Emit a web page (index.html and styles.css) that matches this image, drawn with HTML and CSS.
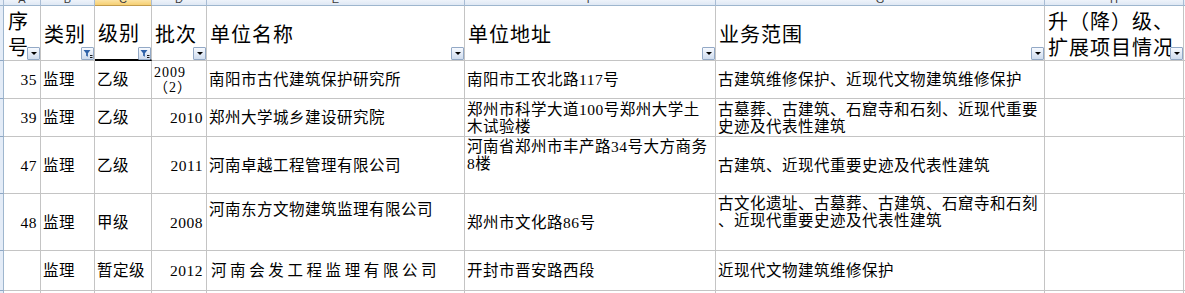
FILE: index.html
```html
<!DOCTYPE html>
<html lang="zh-CN">
<head>
<meta charset="utf-8">
<title>监理单位名单</title>
<link rel="stylesheet" href="styles.css">
</head>
<body>
<div class="sheet">
  <!-- column letter strip -->
  <div class="colhdr corner"></div>
  <div class="colhdr"><span>A</span></div>
  <div class="colhdr"><span>B</span></div>
  <div class="colhdr sel"><span>C</span></div>
  <div class="colhdr"><span>D</span></div>
  <div class="colhdr"><span>E</span></div>
  <div class="colhdr"><span>F</span></div>
  <div class="colhdr"><span>G</span></div>
  <div class="colhdr"><span>H</span></div>
  <div class="colhdr"><span>I</span></div>

  <!-- header row -->
  <div class="rowhdr"></div>
  <div class="cell head"><span class="wrap">序号</span><i class="dd"></i></div>
  <div class="cell head">类别<i class="dd flt"><svg viewBox="0 0 13 13" width="13" height="13"><path d="M2.5 3h7l-2.6 3.2v3.6l-1.8-1V6.2z" fill="#2f62a8"/><path d="M9 8.5h2.5M9 10.5h2.5" stroke="#1b1b1b" stroke-width="1"/></svg></i></div>
  <div class="cell head active">级别<i class="dd flt"><svg viewBox="0 0 13 13" width="13" height="13"><path d="M2.5 3h7l-2.6 3.2v3.6l-1.8-1V6.2z" fill="#2f62a8"/><path d="M9 8.5h2.5M9 10.5h2.5" stroke="#1b1b1b" stroke-width="1"/></svg></i></div>
  <div class="cell head">批次<i class="dd"></i></div>
  <div class="cell head">单位名称<i class="dd"></i></div>
  <div class="cell head">单位地址<i class="dd"></i></div>
  <div class="cell head">业务范围<i class="dd"></i></div>
  <div class="cell head h-last">升（降）级、<br>扩展项目情况<i class="dd"></i></div>
  <div class="cell"></div>

  <!-- row 1 -->
  <div class="rowhdr"></div>
  <div class="cell num">35</div>
  <div class="cell">监理</div>
  <div class="cell">乙级</div>
  <div class="cell batch">2009<br>（2）</div>
  <div class="cell">南阳市古代建筑保护研究所</div>
  <div class="cell">南阳市工农北路117号</div>
  <div class="cell">古建筑维修保护、近现代文物建筑维修保护</div>
  <div class="cell"></div>
  <div class="cell"></div>

  <!-- row 2 -->
  <div class="rowhdr"></div>
  <div class="cell num">39</div>
  <div class="cell">监理</div>
  <div class="cell">乙级</div>
  <div class="cell num">2010</div>
  <div class="cell">郑州大学城乡建设研究院</div>
  <div class="cell">郑州市科学大道100号郑州大学土<br>木试验楼</div>
  <div class="cell">古墓葬、古建筑、石窟寺和石刻、近现代重要<br>史迹及代表性建筑</div>
  <div class="cell"></div>
  <div class="cell"></div>

  <!-- row 3 -->
  <div class="rowhdr"></div>
  <div class="cell num">47</div>
  <div class="cell">监理</div>
  <div class="cell">乙级</div>
  <div class="cell num">2011</div>
  <div class="cell">河南卓越工程管理有限公司</div>
  <div class="cell top">河南省郑州市丰产路34号大方商务<br>8楼</div>
  <div class="cell">古建筑、近现代重要史迹及代表性建筑</div>
  <div class="cell"></div>
  <div class="cell"></div>

  <!-- row 4 -->
  <div class="rowhdr"></div>
  <div class="cell num">48</div>
  <div class="cell">监理</div>
  <div class="cell">甲级</div>
  <div class="cell num">2008</div>
  <div class="cell upper">河南东方文物建筑监理有限公司</div>
  <div class="cell">郑州市文化路86号</div>
  <div class="cell top">古文化遗址、古墓葬、古建筑、石窟寺和石刻<br>、近现代重要史迹及代表性建筑</div>
  <div class="cell"></div>
  <div class="cell"></div>

  <!-- row 5 -->
  <div class="rowhdr"></div>
  <div class="cell num"></div>
  <div class="cell">监理</div>
  <div class="cell">暂定级</div>
  <div class="cell num">2012</div>
  <div class="cell wide">河南会发工程监理有限公司</div>
  <div class="cell">开封市晋安路西段</div>
  <div class="cell">近现代文物建筑维修保护</div>
  <div class="cell"></div>
  <div class="cell"></div>

  <!-- row 6 -->
  <div class="rowhdr"></div>
  <div class="cell"></div>
  <div class="cell"></div>
  <div class="cell"></div>
  <div class="cell"></div>
  <div class="cell"></div>
  <div class="cell"></div>
  <div class="cell"></div>
  <div class="cell"></div>
  <div class="cell"></div>
</div>
</body>
</html>
```

FILE: styles.css
```css
* { box-sizing: border-box; }

html, body {
  margin: 0;
  padding: 0;
  background: #ffffff;
  overflow: hidden;
}

body {
  font-family: "Liberation Serif", "Noto Sans CJK SC", serif;
  color: #000;
}

.sheet {
  display: grid;
  grid-template-columns: 4px 37px 54px 57px 55px 258px 251px 329px 139px 40px;
  grid-template-rows: 6px 55px 38px 38px 57px 57px 40px 30px;
  width: 1224px;
}

.colhdr {
  background: linear-gradient(#eef3fa, #dfe8f4);
  border-right: 1px solid #a9bdd5;
  border-bottom: 1px solid #9eb6ce;
  overflow: hidden;
  display: flex;
  justify-content: center;
  font-family: "Liberation Sans", sans-serif;
  font-size: 11px;
  line-height: 11px;
  color: #3b3b3b;
}
.colhdr span { margin-top: -6px; }
.colhdr.corner { background: #e4ecf7; }
.colhdr.sel {
  background: linear-gradient(#fbe3a4, #f6cf72);
  border-bottom-color: #c29b4b;
}

.rowhdr {
  background: #e4ecf7;
  border-right: 1px solid #9eb6ce;
  border-bottom: 1px solid #8ea7c4;
}

.cell {
  position: relative;
  border-right: 1px solid #c4c4c4;
  border-bottom: 1px solid #c4c4c4;
  padding: 0 2px;
  display: flex;
  align-items: center;
  font-size: 15.5px;
  line-height: 17px;
  letter-spacing: 0.5px;
  white-space: nowrap;
  font-family: "Liberation Serif", "Noto Sans CJK SC", serif;
}

.cell.num {
  justify-content: flex-end;
  padding-right: 3px;
}

.cell.batch {
  flex-direction: column;
  justify-content: center;
  align-items: flex-start;
  padding-left: 2px;
  font-size: 14px;
  line-height: 15px;
  letter-spacing: 1px;
}

.cell.top {
  align-items: flex-start;
  padding-top: 1px;
}

.cell.upper {
  align-items: flex-start;
  padding-top: 7px;
}

.cell.wide {
  letter-spacing: 3.6px;
  padding-left: 4px;
}

.cell.head {
  align-items: center;
  font-size: 20px;
  line-height: 26px;
  letter-spacing: 1px;
  padding-left: 3px;
  padding-top: 1px;
  font-family: "Noto Sans CJK SC", sans-serif;
}
.cell.head .wrap {
  white-space: normal;
  width: 22px;
  display: block;
  padding-left: 1px;
}
.cell.head.active {
  border-bottom: 2px solid #000;
}
.cell.h-last {
  align-items: center;
  overflow: hidden;
}

.dd {
  position: absolute;
  right: 0;
  bottom: 0;
  width: 13px;
  height: 13px;
  border: 1px solid #93a9c6;
  border-radius: 1px;
  background: linear-gradient(#f7faff, #cfdcee);
  display: block;
}
.dd::after {
  content: "";
  position: absolute;
  left: 3px;
  top: 4px;
  border-left: 3px solid transparent;
  border-right: 3px solid transparent;
  border-top: 3px solid #000;
}
.cell.head.active .dd { bottom: -1px; }
.dd.flt::after { display: none; }
.dd.flt svg {
  position: absolute;
  left: -1px;
  top: -1px;
}
```
